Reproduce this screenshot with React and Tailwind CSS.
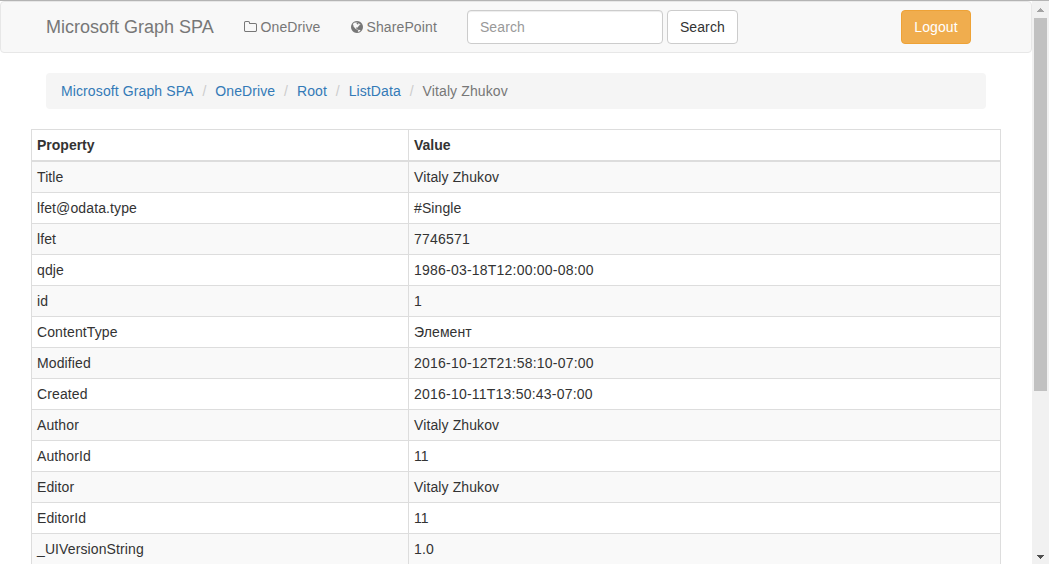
const rows = [
  ['Title', 'Vitaly Zhukov'],
  ['lfet@odata.type', '#Single'],
  ['lfet', '7746571'],
  ['qdje', '1986-03-18T12:00:00-08:00'],
  ['id', '1'],
  ['ContentType', 'Элемент'],
  ['Modified', '2016-10-12T21:58:10-07:00'],
  ['Created', '2016-10-11T13:50:43-07:00'],
  ['Author', 'Vitaly Zhukov'],
  ['AuthorId', '11'],
  ['Editor', 'Vitaly Zhukov'],
  ['EditorId', '11'],
  ['_UIVersionString', '1.0'],
];

const crumbs = ['Microsoft Graph SPA', 'OneDrive', 'Root', 'ListData'];

function FolderIcon() {
  return (
    <svg className="h-[14px] w-[13px] shrink-0" viewBox="64 0 1664 1792" fill="currentColor" aria-hidden="true">
      <path d="M1600 1312v-704q0-40-28-68t-68-28h-704q-40 0-68-28t-28-68v-64q0-40-28-68t-68-28h-320q-40 0-68 28t-28 68v960q0 40 28 68t68 28h1216q40 0 68-28t28-68zm128-704v704q0 92-66 158t-158 66h-1216q-92 0-158-66t-66-158v-960q0-92 66-158t158-66h320q92 0 158 66t66 158v32h672q92 0 158 66t66 158z" />
    </svg>
  );
}

function GlobeIcon() {
  return (
    <svg className="h-[14px] w-[12px] shrink-0" viewBox="128 0 1536 1792" fill="currentColor" aria-hidden="true">
      <path d="M896 128q209 0 385.5 103t279.5 279.5 103 385.5-103 385.5-279.5 279.5-385.5 103-385.5-103-279.5-279.5-103-385.5 103-385.5 279.5-279.5 385.5-103zm274 521q-2 1-9.5 9.5t-13.5 9.5q2 0 4.5-5t5-11 3.5-7q6-7 22-15 14-6 52-12 34-8 51 11-2-2 9.5-13t14.5-12q3-2 15-4.5t15-7.5l2-22q-12 1-17.5-7t-6.5-21q0 2-6 8 0-7-4.5-8t-11.5 1-9 1q-10-3-15-7.5t-8-16.5-4-15q-2-5-9.5-11t-9.5-10q-1-2-2.5-5.5t-3-6.5-4-5.5-5.5-2.5-7 5-7.5 10-4.5 5q-3-2-6-1.5t-4.5 1-4.5 3-5 3.5q-3 2-8.5 3t-8.5 2q15-5-1-11-10-4-16-3 9-4 7.5-12t-8.5-14h5q-1-4-8.5-8.5t-17.5-8.5-13-6q-8-5-34-9.5t-33-.5q-5 6-4.5 10.5t4 14 3.5 12.5q1 6-5.5 13t-6.5 12q0 7 14 15.5t10 21.5q-3 8-16 16t-16 12q-5 8-1.5 18.5t10.5 16.5q2 2 1.5 4t-3.5 4.5-5.5 4-6.5 3.5l-3 2q-11 5-20.5-6t-13.5-26q-7-25-16-30-23-8-29 1-5-13-41-26-25-9-58-4 6-1 0-15-7-15-19-12 3-6 4-17.5t1-13.5q3-13 12-23 1-1 7-8.5t9.5-13.5.5-6q35 4 50-11 5-5 11.5-17t10.5-17q9-6 14-5.5t14.5 5.5 14.5 5q14 1 15.5-11t-7.5-20q12 1 3-17-4-7-8-9-12-4-27 5-8 4 2 8-1-1-9.5 10.5t-16.5 17.5-16-5q-1-1-5.5-13.5t-9.5-13.5q-8 0-16 15 3-8-11-15t-24-8q19-12-8-27-7-4-20.5-5t-19.5 4q-5 7-5.5 11.5t5 8 10.5 5.5 11.5 4 8.5 3q14 10 8 14-2 1-8.5 3.5t-11.5 4.5-6 4q-3 4 0 14t-2 14q-5-5-9-17.5t-7-16.5q7 9-25 6l-10-1q-4 0-16 2t-20.5 1-13.5-8q-4-8 0-20 1-4 4-2-4-3-11-9.5t-10-8.5q-46 15-94 41 6 1 12-1 5-2 13-6.5t10-5.5q34-14 42-7l5-5q14 16 20 25-7-4-30-1-20 6-22 12 7 12 5 18-4-3-11.5-10t-14.5-11-15-5q-16 0-22 1-146 80-235 222 7 7 12 8 4 1 5 9t2.5 11 11.5-3q9 8 3 19 1-1 44 27 19 17 21 21 3 11-10 18-1-2-9-9t-9-4q-3 5 .5 18.5t10.5 12.5q-7 0-9.5 16t-2.5 35.5-1 23.5l2 1q-3 12 5.5 34.5t21.5 19.5q-13 3 20 43 6 8 8 9 3 2 12 7.5t15 10 10 10.5q4 5 10 22.5t14 23.5q-2 6 9.5 20t10.5 23q-1 0-2.5 1t-2.5 1q3 7 15.5 14t15.5 13q1 3 2 10t3 11 8 2q2-20-24-62-15-25-17-29-3-5-5.5-15.5t-4.5-14.5q2 0 6 1.5t8.5 3.5 7.5 4 2 3q-3 7 2 17.5t12 18.5 17 19 12 13q6 6 14 19.5t0 13.5q9 0 20 10.5t17 19.5q5 8 8 26t5 24q2 7 8.5 13.5t12.5 9.5l16 8 13 7q5 2 18.5 10.5t21.5 11.5q10 4 16 4t14.5-2.5 13.5-3.5q15-2 29 15t21 21q36 19 55 11-2 1 .5 7.5t8 15.5 9 14.5 5.5 8.5q5 6 18 15t18 15q6-4 7-9-3 8 7 20t18 10q14-3 14-32-31 15-49-18 0-1-2.5-5.5t-4-8.5-2.5-8.5 0-7.5 5-3q9 0 10-3.5t-2-12.5-4-13q-1-8-11-20t-12-15q-5 9-16 8t-16-9q0 1-1.5 5.5t-1.5 6.5q-13 0-15-1 1-3 2.5-17.5t3.5-22.5q1-4 5.5-12t7.5-14.5 4-12.5-4.5-9.5-17.5-2.5q-19 1-26 20-1 3-3 10.5t-5 11.5-9 7q-7 3-24 2t-24-5q-13-8-22.5-29t-9.5-37q0-10 2.5-26.5t3-25-5.5-24.5q3-2 9-9.5t10-10.5q2-1 4.5-1.5t4.5 0 4-1.5 3-6q-1-1-4-3-3-3-4-3 7 3 28.5-1.5t27.5 1.5q15 11 22-2 0-1-2.5-9.5t-.5-13.5q5 27 29 9 3 3 15.5 5t17.5 5q3 2 7 5.5t5.5 4.5 5-.5 8.5-6.5q10 14 12 24 11 40 19 44 7 3 11 2t4.5-9.5 0-14-1.5-12.5l-1-8v-18l-1-8q-15-3-18.5-12t1.5-18.5 15-18.5q1-1 8-3.5t15.5-6.5 12.5-8q21-19 15-35 7 0 11-9-1 0-5-3t-7.5-5-4.5-2q9-5 2-16 5-3 7.5-11t7.5-10q9 12 21 2 8-8 1-16 5-7 20.5-10.5t18.5-9.5q7 2 8-2t1-12 3-12q4-5 15-9t13-5l17-11q3-4 0-4 18 2 31-11 10-11-6-20 3-6-3-9.5t-15-5.5q3-1 11.5-.5t10.5-1.5q15-10-7-16-17-5-43 12zm-163 877q206-36 351-189-3-3-12.5-4.5t-12.5-3.5q-18-7-24-8 1-7-2.5-13t-8-9-12.5-8-11-7q-2-2-7-6t-7-5.5-7.5-4.5-8.5-2-10 1l-3 1q-3 1-5.5 2.5t-5.5 3-4 3 0 2.5q-21-17-36-22-5-1-11-5.5t-10.5-7-10-1.5-11.5 7q-5 5-6 15t-2 13q-7-5 0-17.5t2-18.5q-3-6-10.5-4.5t-12 4.5-11.5 8.5-9 6.5-8.5 5.5-8.5 7.5q-3 4-6 12t-5 11q-2-4-11.5-6.5t-9.5-5.5q2 10 4 35t5 38q7 31-12 48-27 25-29 40-4 22 12 26 0 7-8 20.5t-7 21.5q0 6 2 16z" />
    </svg>
  );
}

function Navbar() {
  return (
    <nav className="flex h-[52px] items-center rounded-[4px] border border-[#e7e7e7] bg-[#f8f8f8] pl-[45px] pr-[60px] text-[#777]">
      <a href="#" className="w-[167.5px] whitespace-nowrap text-[18px] leading-5 tracking-normal">Microsoft Graph SPA</a>
      <a href="#" className="ml-[30px] flex items-center gap-1">
        <FolderIcon />
        OneDrive
      </a>
      <a href="#" className="ml-[30px] flex items-center gap-1">
        <GlobeIcon />
        SharePoint
      </a>
      <form className="ml-[30px] flex gap-1">
        <input
          type="text"
          placeholder="Search"
          className="h-[34px] w-[196px] rounded-[4px] border border-[#ccc] bg-white px-3 shadow-[inset_0_1px_1px_rgba(0,0,0,0.075)] placeholder:text-[#999]"
        />
        <button type="button" className="h-[34px] w-[71px] rounded-[4px] border border-[#ccc] bg-white text-[#333]">
          Search
        </button>
      </form>
      <button type="button" className="ml-auto h-[34px] w-[70px] rounded-[4px] border border-[#eea236] bg-[#f0ad4e] text-white">
        Logout
      </button>
    </nav>
  );
}

function Breadcrumb() {
  return (
    <ol className="mx-[46px] mt-5 flex h-9 items-center rounded-[4px] bg-[#f5f5f5] px-[15px]">
      {crumbs.map((label) => (
        <li key={label} className="flex">
          <a href="#" className="text-[#337ab7]">{label}</a>
          <span className="w-[21.7px] text-center text-[#ccc]">/</span>
        </li>
      ))}
      <li className="text-[#777]">Vitaly Zhukov</li>
    </ol>
  );
}

function PropertyTable() {
  return (
    <table className="ml-[31px] mt-5 w-[970px] table-fixed border-separate border-spacing-0 border-l border-t border-[#ddd] text-left">
      <thead className="tracking-normal">
        <tr>
          <th className="w-[377px] border-b-2 border-r border-[#ddd] p-[5px] font-bold">Property</th>
          <th className="border-b-2 border-r border-[#ddd] p-[5px] font-bold">Value</th>
        </tr>
      </thead>
      <tbody>
        {rows.map(([name, value]) => (
          <tr key={name} className="odd:bg-[#f9f9f9]">
            <td className="border-b border-r border-[#ddd] p-[5px]">{name}</td>
            <td className={`border-b border-r border-[#ddd] p-[5px] ${/^\d{4}/.test(value) ? 'tracking-[0.22px]' : ''}`}>
              {value}
            </td>
          </tr>
        ))}
      </tbody>
    </table>
  );
}

function Scrollbar() {
  return (
    <div className="flex w-[17px] shrink-0 flex-col items-center bg-[#f1f1f1]">
      <div className="flex h-[17px] items-start pt-[7px]">
        <svg className="h-[4px] w-[7px]" viewBox="0 0 7 4" fill="#a3a3a3" shapeRendering="crispEdges" aria-hidden="true">
          <path d="M3 0h1v1h1v1h1v1h1v1H0V3h1V2h1V1h1z" />
        </svg>
      </div>
      <div className="h-[373px] w-[13px] bg-[#c1c1c1]" />
      <div className="mt-auto flex h-[17px] items-start pt-2">
        <svg className="h-[4px] w-[7px]" viewBox="0 0 7 4" fill="#505050" shapeRendering="crispEdges" aria-hidden="true">
          <path d="M0 0h7v1H6v1H5v1H4v1H3V3H2V2H1V1H0z" />
        </svg>
      </div>
    </div>
  );
}

export default function App() {
  return (
    <div className="flex h-[564px] w-[1049px] overflow-hidden border-t border-[#b4b4b4] bg-white font-['Liberation_Sans',Arial,sans-serif] text-[14px] leading-5 tracking-[0.11px] text-[#333]">
      <main className="min-w-0 flex-1 overflow-hidden">
        <Navbar />
        <Breadcrumb />
        <PropertyTable />
      </main>
      <Scrollbar />
    </div>
  );
}
